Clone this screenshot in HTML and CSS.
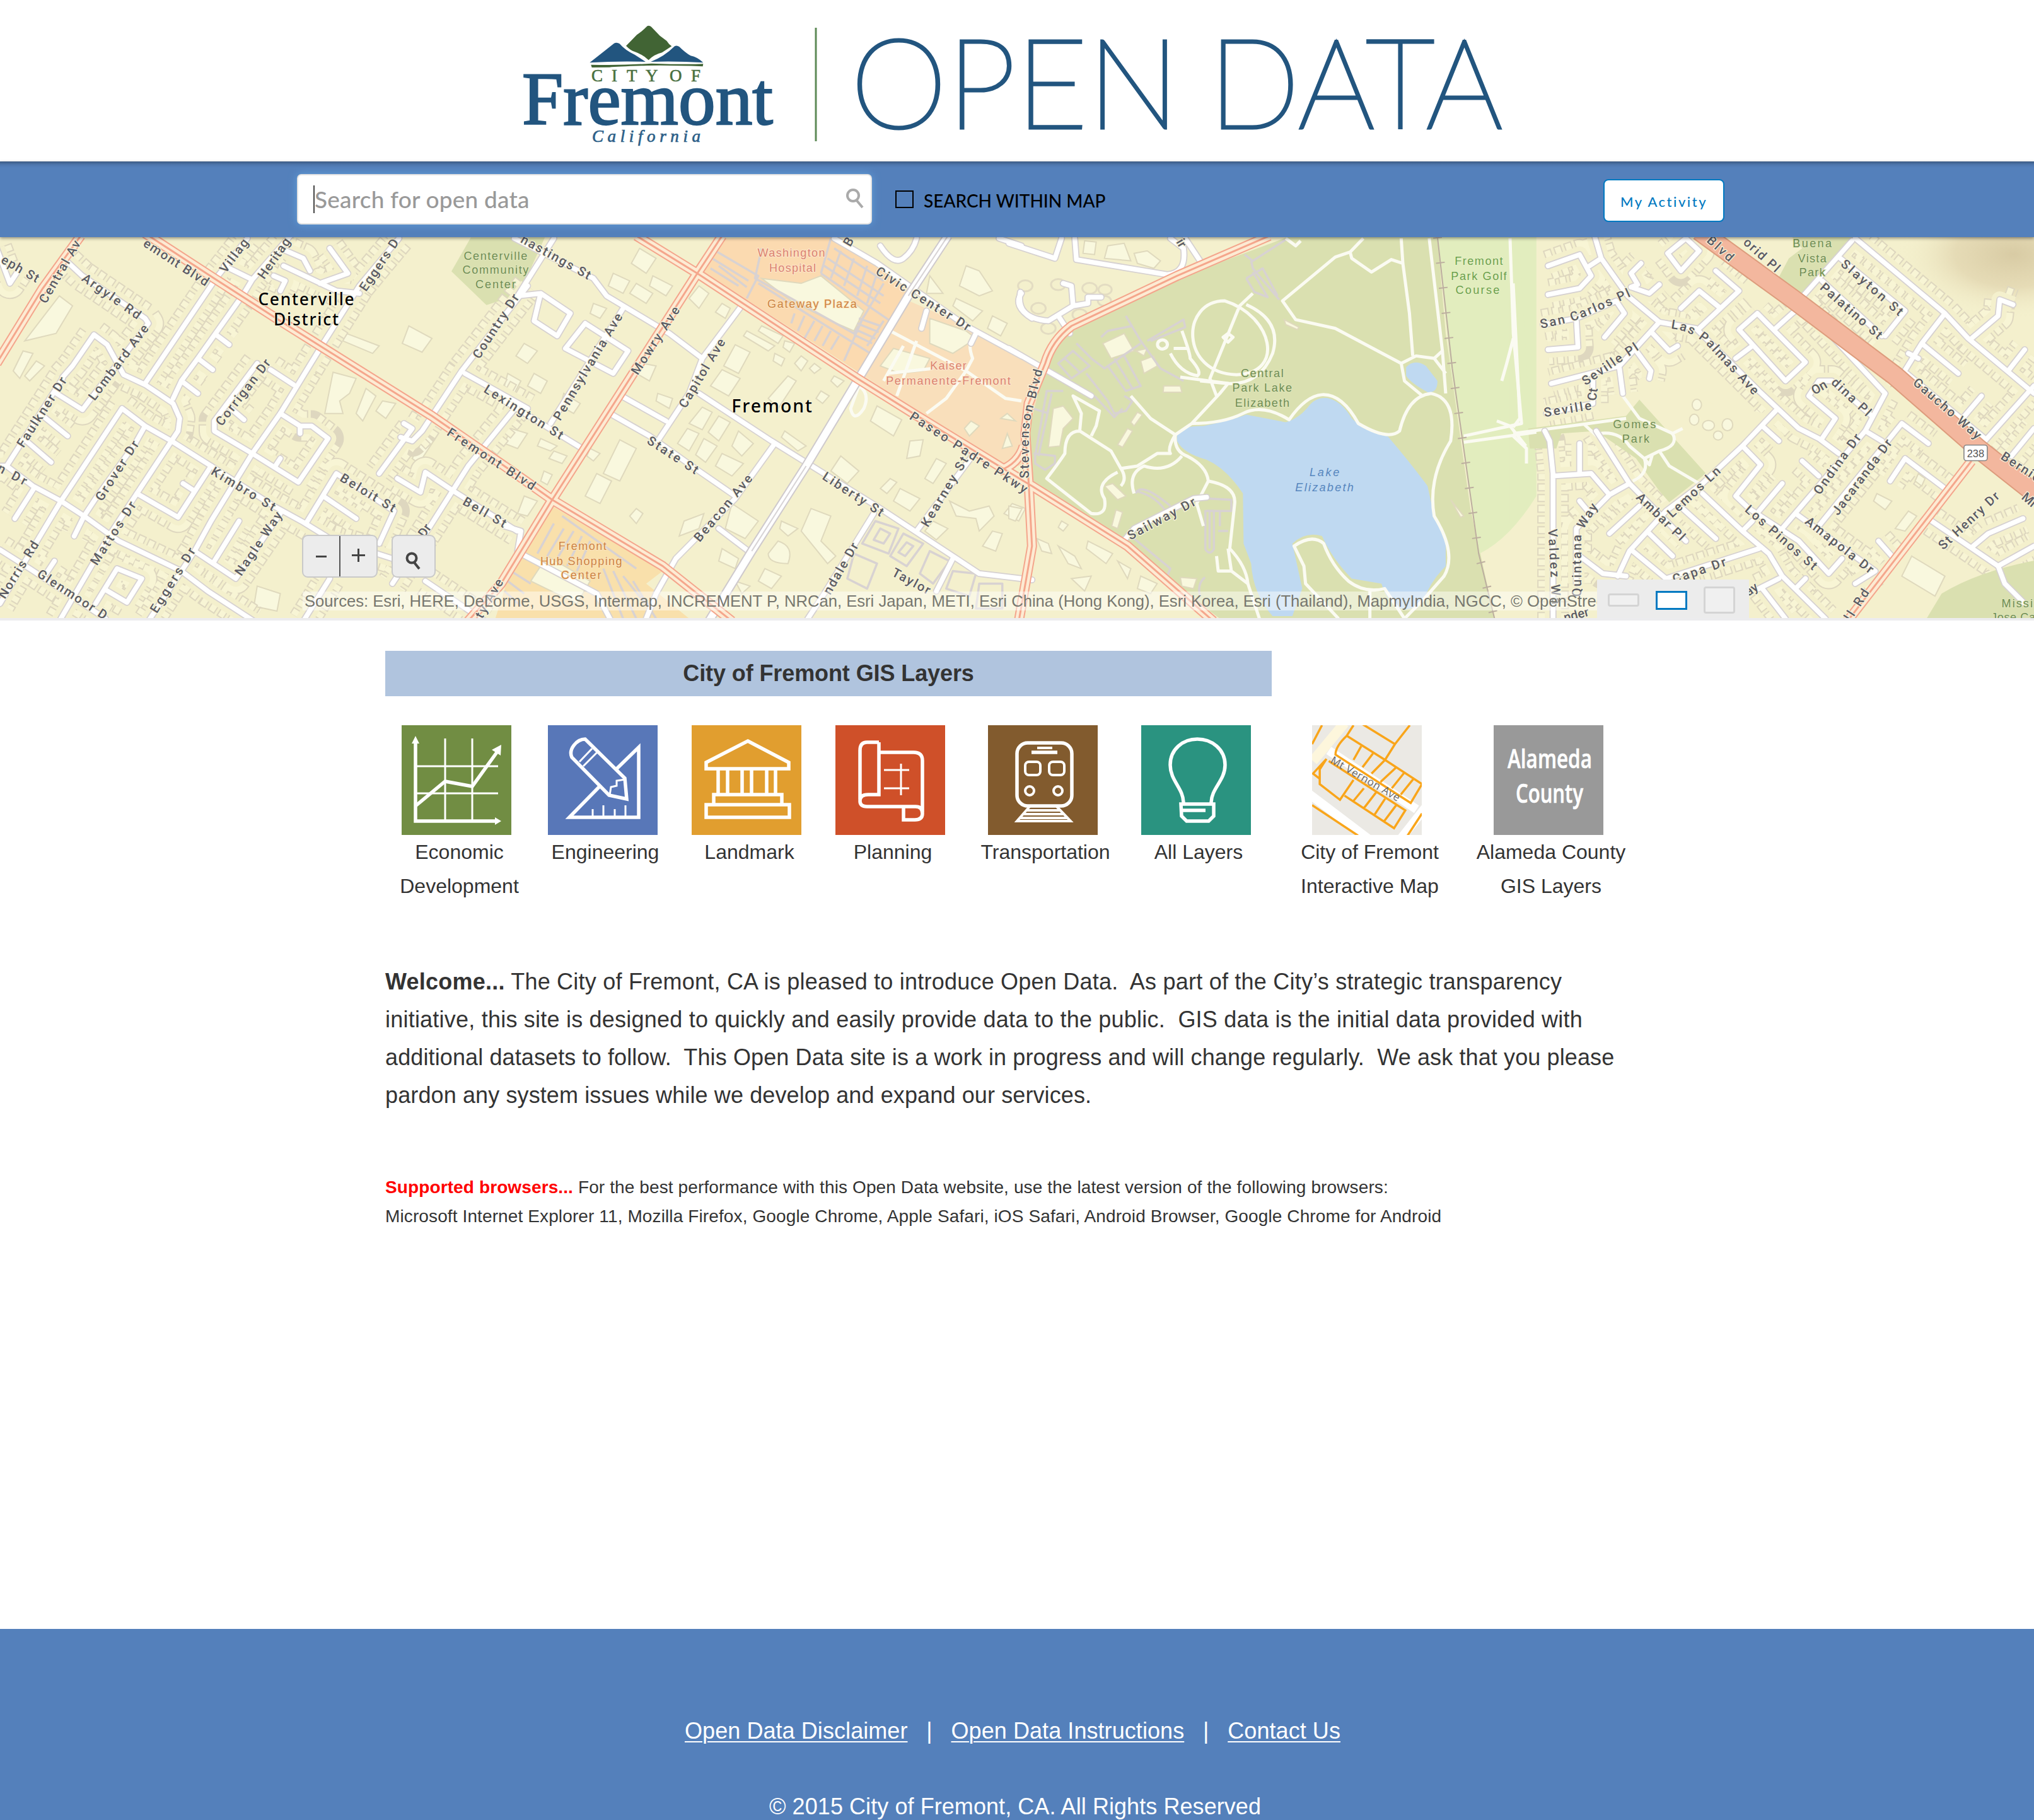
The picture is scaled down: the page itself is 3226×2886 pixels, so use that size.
FILE: index.html
```html
<!DOCTYPE html>
<html lang="en">
<head>
<meta charset="utf-8">
<title>City of Fremont Open Data</title>
<link rel="stylesheet" href="styles.css">
</head>
<body>
<header class="masthead">
  <svg class="logo" width="1586" height="256" viewBox="820 0 1586 256" role="img" aria-label="City of Fremont California Open Data">
    <g transform="translate(820 30) scale(.3333)">
      <path class="navy" d="M346 208Q400 165 462 116Q475 110 488 118Q515 150 560 170L612 204Q480 200 346 208Z"/>
      <path class="navy" d="M636 204Q700 180 750 130Q760 124 772 132Q800 160 826 175Q860 182 886 208Q760 200 636 204Z"/>
      <path class="green" d="M519 128L570 76Q600 55 620 34Q629 29 638 37L680 80L712 104Q722 120 736 130L690 160Q650 170 626 196Q600 170 560 156Q540 150 519 128Z"/>
      <path class="green" d="M352 218Q500 222 640 212Q800 218 886 214L884 226Q740 220 620 222Q480 226 440 230Q400 230 356 231Z"/>
    </g>
    <text class="city" y="129" x="938 970 994 1024 1062 1096">CITYOF</text>
    <text class="fremont" x="828" y="197" textLength="398" lengthAdjust="spacingAndGlyphs">Fremont</text>
    <text class="california" x="939" y="225" textLength="172">California</text>
    <path class="rule" d="M1294 44V224"/>
    <text class="open" x="1349" y="203" textLength="522" lengthAdjust="spacingAndGlyphs">OPEN</text>
    <text class="open" x="1917" y="203" textLength="466" lengthAdjust="spacingAndGlyphs">DATA</text>
  </svg>
</header>

<div class="searchbar">
  <div class="field">
    <span class="placeholder">Search for open data</span>
    <svg width="32" height="34" viewBox="0 0 32 34"><circle cx="12" cy="11" r="9"/><path d="M17 18L27 30"/></svg>
  </div>
  <label class="within"><span class="box"></span><span>SEARCH WITHIN MAP</span></label>
  <button class="activity">My Activity</button>
</div>

<section class="map">
<svg class="tiles" viewBox="0 182.76 1568 292.6" preserveAspectRatio="none">
  <defs>
    <radialGradient id="hill"><stop offset="0" stop-color="#d8cba4"/><stop offset=".5" stop-color="#e2d6b0" stop-opacity=".8"/><stop offset="1" stop-color="#f4f0cd" stop-opacity="0"/></radialGradient>
    <g id="west" transform="translate(0 179.84) scale(.2542 .1922)">
      <path d="M-10 60L30 200L60 140M205 115L250 170L440 340L450 360L270 670L250 705L165 635M190 575L220 530L285 405L325 445L375 565L440 605L525 680L545 740L540 790L520 830"/>
      <path d="M750 20L655 180L440 600M880 10L765 185L740 240L600 500L550 590L525 660M655 405L695 445M600 500L645 545M550 590L600 640M680 130L765 185"/>
      <path d="M1210 20L1090 210L980 440L850 720L765 880L640 1150L590 1270L450 1550M860 130L1020 230L1090 240M830 170L865 190L850 230M1000 60L1055 160L970 200M850 60L920 100L940 150"/>
      <path d="M820 545L890 605M780 520L650 750L650 790L765 880L905 995L995 820L945 770L910 770L850 720M910 770V800M700 700L740 745M850 900L835 930"/>
      <path d="M370 700L440 770L520 830L640 930L830 1090L920 1155L1000 1220L1190 1300M370 700L185 1070L110 1235L0 1480M440 770L410 840L290 1060L255 1130L225 1210M520 830L415 1040L330 1210L180 1550"/>
      <path d="M415 1040L540 1135L640 930M555 1000L590 1030M-10 930L20 930L100 1010L185 1070L255 1130L360 1230L550 1350L630 1430L770 1550M105 1015L45 1140M165 1310L140 1360M0 1265L90 1340L320 1540"/>
      <path d="M190 580L20 930M80 830L155 915M130 730L205 810M590 1270L715 1380L850 1120M650 1310L725 1150M290 1480L355 1340L430 1380L385 1475L320 1425"/>
      <path d="M930 1155L1020 960L1195 1110L1150 1240M980 1050L1080 1140M1225 760L1250 780L1150 960M1205 980L1275 1035L1290 955L1375 1030L1568 1190"/>
      <path d="M1600 210L1400 550L1280 790L1250 830L1215 815M1410 560L1600 700M1568 690L1420 930L1300 1180L1190 1400M1000 1380L920 1550M1290 1390L1470 1550"/>
    </g>
    <g id="east" transform="translate(1166.5 179.84) scale(.25605 .1922)">
      <path d="M245 10L265 100L345 250L440 355L550 380L740 630L860 780L920 820L980 880M265 100L230 130M105 130L200 85L235 170L200 220L105 245M355 215L410 240L440 205M355 215L375 205L355 160L385 120"/>
      <path d="M90 365L190 340L310 270L335 320L275 415M190 340L195 455L105 465M440 355L320 530L115 600M365 460L415 550L410 580M420 400L470 470L495 450M320 540L330 640M240 560L240 680L100 720"/>
      <path d="M465 80L505 150L560 70L520 20L465 80M610 150L680 230L560 380M505 300L560 230L620 295M735 320L680 385L820 590L880 515L735 320M790 380L840 320L870 290M670 500L715 455"/>
      <path d="M1030 20L1300 320L1370 420L1568 640M1020 30L920 180L860 270M985 100L1180 310L1120 410M930 190L1110 410M1300 320L1230 440L1160 590M1230 440L1340 560M1190 480L1220 500M1380 420L1460 330L1465 265L1505 285M1490 550L1540 465"/>
      <path d="M860 270L1120 640L1060 790L1110 830M1185 560L1420 820M1340 760L1410 650M1420 830L1568 610M1500 890L1568 780M930 820L970 740L890 650L920 590L960 590L1080 730"/>
      <path d="M790 710L690 850L570 1000L460 1110L350 1270L315 1370M750 770L800 830M690 850L745 925L670 1050L710 1100L860 1230L950 1360L990 1300M570 1040L690 1190L770 1280L810 1370L940 1540M690 1190L720 1150"/>
      <path d="M1060 790L900 1040L810 1180M870 910L920 970M740 1110L810 1000M1170 760L920 1170M1170 760L1250 840M1180 900L1300 1020M1180 900L1135 990M850 1120L1090 1350M1100 1230L1140 1290M1090 1350L1030 1400M850 1420L880 1380"/>
      <path d="M1260 1150L1460 1330L1568 1250M1385 1250L1430 1200L1535 1140M95 790L110 830L120 960L120 1540M120 970L235 960L290 1045M200 960V840M200 1070L225 1110M350 1000L290 1045L190 1180L190 1400M290 1200L380 1090M250 790L350 1000L520 1230"/>
      <path d="M410 1200L480 1290M510 1100L610 1220M360 1270L460 1380M740 1260L460 1380M190 1280L270 1360L340 1370M740 1420L800 1380M750 1420L820 1540M1460 1330L1480 1400L1540 1480"/>
    </g>
    <g id="central" transform="translate(388.84 179.84) scale(.2542 .1922)">
      <path d="M30 20L270 180L310 250L500 400L600 500M590 640L810 830L920 920L1140 1100L1360 1290L1440 1360L1600 1385M725 280L600 500L560 640L470 820M355 650L490 750M320 720L440 810L590 950L700 1050"/>
      <path d="M820 840L700 1060L580 1220L520 1300L460 1440L430 1540M650 1180L745 1275M1000 20L1130 120L1400 370L1568 490M360 300L140 760M150 20L40 250L110 240L200 320L160 410L90 350L110 240"/>
      <path d="M245 360L185 460L330 560L375 470L245 360M0 670L230 855M0 1170L50 1190L40 1270M1430 870L1250 1190M1120 1120L970 1440L920 1540M1360 1300L1310 1430M50 1280L280 1440L320 1540M1280 310L1265 380M1430 400L1415 440"/>
      <path d="M1140 50Q1180 130 1210 100T1250 20M1500 20L1568 50M1568 240Q1540 290 1600 340"/>
    </g>
    <g id="cityhall" transform="translate(777.68 179.84) scale(.2542 .1922)">
      <path d="M0 40L140 100L160 20M200 20L205 105L480 165Q540 160 530 60L490 20M535 20L585 120M0 460L250 650M35 235Q20 340 120 350L195 290L240 280V255H280M195 290L190 210L165 200M150 330L185 400M345 1235L380 1180L560 1060L600 1055"/>
    </g>
    <g id="trails" transform="translate(777.68 179.84) scale(.2542 .1922)">
      <path d="M1075 20L1035 75L990 95L830 270L870 345L990 380L1190 520L1235 490L1290 500L1315 470M1035 75L1040 100L1100 155L1160 105L1195 120L1190 20M1195 120L1215 320L1225 490M1275 20L1315 470L1325 640M1290 500L1325 560M1190 520L1200 590L1255 650"/>
      <path d="M555 760Q650 760 710 720T850 745Q900 650 950 645Q1010 640 1060 760Q1150 830 1185 790Q1210 650 1280 640Q1360 660 1340 830Q1270 980 1290 1130Q1360 1280 1320 1370L1260 1460L1200 1540M505 805L555 760L640 640L665 600L520 575"/>
      <path d="M655 270C520 270 520 560 690 565C840 560 800 330 655 270ZM720 285Q830 350 800 480Q760 610 660 600L580 590M740 240L700 290L610 580L630 650M665 400L650 415L665 435L680 415Z"/>
      <path d="M370 650L430 740L505 805Q480 860 490 880L450 880L390 930L340 940L310 870L215 790L220 720L195 650L275 710L265 770L250 810M215 790Q170 790 170 880Q150 920 115 980L250 1120Q300 1130 290 1060Q260 1000 330 955M340 940Q360 980 340 1010"/>
      <path d="M505 805Q500 870 540 890Q600 930 605 990Q690 1010 685 1080L670 1260Q720 1330 725 1400L760 1540M525 890Q480 960 410 930Q360 960 380 1040M605 990L570 1080L590 1170M665 1260L675 1350L725 1400M630 1290L635 1350L675 1350"/>
      <path d="M1000 1540L900 1400L895 1330L865 1250Q920 1200 955 1240Q980 1330 1030 1390Q1080 1440 1140 1420L1200 1540M1095 1430V1540M1520 20L1530 400L1555 760L1380 810M1600 795L1380 835M1530 420L1510 520L1495 590M1480 750L1520 770L1568 850M840 20L870 50L885 30"/>
      <path d="M525 390Q550 480 550 500Q590 560 570 570M500 460H540M490 480Q520 560 575 570M475 430A15 18 0 1 0 476 431Z"/>
    </g>
    <g id="eastTrails" transform="translate(1166.5 179.84) scale(.25605 .1922)">
      <path d="M0 800L200 765L340 740M215 765L260 820M330 650L380 740L480 800Q500 850 440 870L395 900L410 925L420 880M260 800Q320 790 350 850L395 900Q410 960 360 990M440 870L470 930L560 1000M0 810L40 860V920M0 200L20 740L0 775M480 800L510 780"/>
    </g>
    <g id="lots" transform="translate(777.68 179.84) scale(.2542 .1922)">
      <path d="M840 25L740 110L715 85M735 110L740 140L820 265M720 180L770 140L815 250M720 180L745 235L785 255L740 155M355 330L400 430L460 540L530 590M280 415L300 390L375 370M420 430L530 345L535 375L430 430M205 440L250 500L290 540L400 440M150 520L195 470L245 530L190 580ZM170 500L215 555M300 530L355 630L400 610L350 490M235 560L300 670L320 720L355 710L375 670L350 650M320 500L375 620M260 650L320 735L345 700"/>
      <path d="M165 630H115L80 890V920L110 945L140 920V890L75 880M130 640L90 890M50 690L120 720M385 1040Q400 990 490 1090M385 1030Q450 1050 480 1120M600 1060L675 1065V1110H600M380 1220L490 1340L480 1370M595 1375Q570 1400 580 1450"/>
      <path d="M596 1110V1262Q608 1290 622 1262V1110ZM609 1110V1260M640 1110V1170M635 1190H665"/>
    </g>
    <g id="centralLots" transform="translate(388.84 179.84) scale(.2542 .1922)">
      <path d="M640 70L770 170L735 260M630 100L740 190M650 130L735 215M625 140L710 210M780 60L760 180L1060 400L1150 200M960 160L1170 350M1000 60L1150 190M980 100L1150 250M970 130L1140 280M770 200L1110 480M1090 330L1030 510M1150 350L1100 450M880 320L870 360M910 330L890 390M940 350L910 420M965 370L940 430M990 390L965 450M1015 410L990 465M1075 340L1140 370M1070 360L1135 395M1065 385L1125 420M1060 405L1115 440M990 20L960 160M1020 70L990 180M1060 100L1030 210M1100 130L1070 250M1130 160L1100 280"/>
      <path d="M175 1130L400 1340M150 1160L100 1280M180 1180L130 1290M210 1190L160 1300M235 1210L190 1330M260 1230L220 1350M300 1340L360 1540M330 1350L400 1540M360 1370L440 1500M390 1390L460 1540M20 1350L80 1400M10 1390L60 1440M0 1430L50 1490"/>
      <path d="M1125 1150L1195 1180L1165 1280L1085 1240ZM1140 1180L1170 1200L1150 1240L1120 1225ZM1210 1200L1270 1240L1220 1330L1170 1290ZM1220 1235L1240 1250L1215 1290L1195 1275ZM1060 1280L1130 1320L1100 1420L1040 1380ZM1290 1270L1350 1310L1300 1400L1260 1360ZM1360 1350L1430 1360L1410 1450L1340 1420ZM1440 1400H1510V1500H1430Z"/>
    </g>
    <g id="kaiserPaths" transform="translate(388.84 179.84) scale(.2542 .1922)">
      <path d="M1170 390L1400 550L1520 660L1568 670M1400 550L1340 660L1280 720M1250 430L1190 650M1210 450L1150 590M1430 400Q1400 430 1420 500L1400 550M1160 560L1300 540M1075 610Q1110 640 1090 700Q1060 760 1050 700Z"/>
    </g>
    <g id="arterials" transform="translate(388.84 179.84) scale(.2542 .1922)">
      <path d="M400 10L585 160L1070 580L1240 720L1568 985L1600 1010L1890 1250L2150 1550M660 10L585 160L145 1065L-10 1400L-110 1550M2320 10L2040 170L1720 370Q1660 430 1640 520L1590 680L1580 800L1590 1000L1600 1250L1560 1550M1500 950Q1560 920 1575 850"/>
      <path d="M-1090 0L-880 180L-680 350L-220 730L0 930L145 1065L480 1330L690 1550"/>
      <path d="M-1285 10L-1400 220L-1540 520"/>
      <path d="M4449 910L4073 1550"/>
    </g>
  </defs>

  <rect class="ground" y="180" width="1568" height="300"/>
  <ellipse cx="1552" cy="196" rx="90" ry="50" fill="url(#hill)"/>
  <path class="park" d="M363 183H420L400 227L375 235L348 209Z"/>
  <g transform="translate(388.84 179.84) scale(.2542 .1922)">
    <path class="medical" d="M655 20L600 150L1080 560L1170 370L1230 240L1130 120L990 15Z"/>
    <path class="clinic" d="M1210 260L1400 370L1568 490L1640 540L1570 930L1500 920L1090 570Z"/>
    <path class="retail" d="M145 1090L480 1350L430 1400L570 1550H-30L30 1300Z"/>
    <g class="building">
      <path d="M410 60L460 100L430 160L385 120ZM590 210L620 240L590 300L560 260ZM660 280L685 300L670 340L640 315ZM700 445L745 475L710 560L665 530ZM660 545L715 580L680 650L625 610ZM860 570L885 590L830 700L800 660ZM600 695L630 715L600 785L560 760ZM650 730L685 755L650 830L618 795ZM555 780L590 800L560 870L525 840ZM605 820L645 850L610 915L580 885ZM710 790L755 840L720 890L690 850ZM660 880L725 920L690 970L640 930Z"/>
      <path d="M350 825L400 860L350 990L300 960ZM280 960L325 990L290 1080L245 1050ZM400 1100L420 1120L400 1160L380 1130ZM1130 690L1205 745L1180 810L1110 750ZM1020 890L1075 950L1040 1000L990 950ZM1230 830L1270 825L1260 890L1220 900ZM850 790L915 850L890 870L840 815ZM930 1100L990 1130L960 1230L1005 1290L980 1320L900 1190ZM690 1080L770 1150L730 1220L670 1180ZM830 1230Q880 1250 860 1320Q800 1320 800 1280Z"/>
      <path d="M1310 900L1340 920L1300 1000L1275 980ZM1200 1020L1260 1060L1230 1110L1180 1070ZM1170 980L1190 995L1160 1040L1140 1020ZM1300 1150L1345 1180L1310 1225L1275 1190ZM1350 1070L1410 1110L1470 1090L1485 1130L1440 1190L1430 1140L1370 1130ZM1480 1190L1510 1200L1490 1270L1450 1250ZM1400 130L1440 150L1480 230L1440 250L1380 210ZM1370 260L1450 310L1420 350L1360 290ZM1480 330L1525 360L1505 410L1465 380ZM1540 1080L1580 1100L1560 1150L1515 1120Z"/>
      <path d="M780 180L900 200L960 170L1090 310L1060 390L990 350L870 270ZM1290 340L1400 390L1430 420L1360 480L1290 440ZM1180 460L1290 500L1270 550L1200 560L1140 530ZM1415 750L1440 770L1410 810L1395 780ZM1525 800L1540 850L1510 860ZM1525 720L1550 750L1505 740ZM130 1290L260 1390L220 1480L80 1390ZM780 370L845 410L830 440L770 390ZM735 390L820 450L800 470L725 410ZM1000 570L1030 590L1010 615L990 590ZM960 630L985 650L965 680L945 660ZM465 640L510 660L500 700L460 670ZM790 1340L840 1370L810 1420L770 1390ZM545 1150L605 1120L590 1180L530 1210ZM420 520L460 530L440 590L400 560Z"/>
      <path d="M260 860L290 880L270 910L250 890ZM120 950L145 965L130 1005L110 990ZM840 1150L890 1180L860 1210L835 1180ZM900 490L920 510L900 550L880 520ZM940 520L960 540L940 560L925 540ZM820 480L850 500L840 530L815 510ZM850 430L880 440L865 475L845 455ZM700 1390L745 1410L720 1440ZM660 1260L710 1300L700 1340L650 1310ZM1290 170L1330 240L1280 240Z"/>
      <path d="M330 160L380 190L360 240L315 210ZM400 200L450 240L430 280L380 240ZM450 170L510 210L490 250L440 210ZM270 280L310 300L290 340L260 320ZM60 440L100 470L70 520L35 490ZM90 560L130 590L110 640L70 610ZM10 560L50 590L30 640L0 610ZM180 640L230 680L210 720L170 690ZM20 780L70 800L40 860L0 840ZM110 820L160 850L140 870L100 850ZM150 870L190 890L175 920L135 900ZM60 1050L100 1070L70 1130L40 1120Z"/>
    </g>
  </g>
  <g transform="translate(0 179.84) scale(.2542 .1922)" class="building">
    <path d="M1010 555L1080 580L1060 640L1030 670L1040 720L985 720ZM1110 620L1140 650L1100 750L1080 720ZM1160 670L1200 680L1170 740L1140 710ZM1240 370L1310 420L1280 475L1220 440ZM1050 400L1150 450L1130 480L1040 430ZM70 470L100 480L60 580L40 550ZM110 510L135 530L90 590L75 570ZM180 250L220 290L170 400L75 430ZM1290 810L1320 820L1270 920L1250 900ZM780 1410L850 1440L840 1510L770 1490ZM940 540L960 560L940 580Z"/>
  </g>
  <g transform="translate(777.68 179.84) scale(.2542 .1922)">
    <path class="park" d="M845 15H1300L1325 400L1400 1100L1475 1550H650L350 1250L60 1000V800L110 520Q130 440 180 400L510 180Z"/>
    <path class="golf" d="M1300 15H1600V1050Q1520 1220 1428 1280L1340 540Z"/>
    <path class="water" d="M510 800Q520 770 590 770Q670 750 720 725Q780 740 840 755Q880 740 910 690Q930 655 965 658Q1010 670 1040 740Q1080 790 1150 812Q1220 920 1270 1010L1285 1100L1325 1240V1330Q1280 1390 1260 1460Q1230 1510 1190 1500Q1150 1480 1130 1400L1040 1380Q980 1300 950 1210Q900 1190 860 1240L890 1420L860 1530H800Q740 1440 735 1320L712 1240L710 1040Q660 940 600 905Q530 880 510 830Z"/>
    <path class="water" d="M1205 535Q1230 500 1265 530L1300 590Q1300 640 1270 635Q1220 600 1205 570Z"/>
    <g class="building"><path d="M285 440L350 400L380 470L310 500ZM135 700L165 690L195 740L165 780L155 850L120 855ZM470 610L520 610L525 635L468 635ZM400 510L440 490L450 530L410 560ZM385 470L420 460L410 490ZM290 1010L315 1000L355 1050L330 1065ZM325 1105L345 1115L330 1180L312 1170ZM390 715L405 725L380 770L370 755ZM360 780L375 790L345 855L330 845ZM520 1375L570 1380L560 1420L525 1410ZM835 345L880 375L875 385L840 365ZM1340 1065L1380 1130L1370 1135ZM0 1090L40 1100L20 1150L0 1140ZM160 1150L180 1165L165 1190L150 1175ZM240 1230L315 1280L295 1320L235 1260ZM85 1220L120 1240L130 1280L100 1270ZM150 1250L200 1290L220 1340L180 1320ZM380 80L420 70L460 110L440 140L390 120ZM230 30L265 35L260 85L225 80ZM300 50L350 40L370 110L290 100ZM330 1310L370 1340L360 1380ZM400 1370L450 1400L430 1440L390 1420ZM190 1380L250 1370L230 1430Z"/></g>
    <g class="court"><circle cx="50" cy="210" r="22"/><circle cx="90" cy="300" r="22"/><circle cx="150" cy="205" r="22"/><circle cx="245" cy="220" r="22"/><circle cx="292" cy="225" r="20"/><circle cx="215" cy="325" r="22"/><circle cx="120" cy="380" r="22"/><circle cx="290" cy="270" r="20"/></g>
  </g>
  <g transform="translate(1166.5 179.84) scale(.25605 .1922)">
    <path class="golf" d="M-10 15H18L62 1040L-10 1160Z"/>
  </g>

  <g class="line houses"><use href="#west"/><use href="#east"/></g>
  <g class="line roofs"><use href="#west"/><use href="#east"/></g>
  <g class="line yards"><use href="#west"/><use href="#east"/></g>
  <g transform="translate(1166.5 179.84) scale(.25605 .1922)">
    <path class="park" d="M830 100L870 60L840 15H1025L860 270L790 200Z"/>
    <path class="ground" d="M395 580L600 680L760 720L700 800L570 960L400 670L370 620Z"/>
    <path class="park" d="M45 780L340 730L380 665L580 960L470 1075L440 1030L370 900L250 790L145 800L130 860H50Z"/>
    <path class="park" d="M1580 1305Q1400 1350 1290 1440L1240 1550H1580Z"/>
  </g>
  <g transform="translate(1166.5 179.84) scale(.25605 .1922)" class="building">
    <ellipse cx="553" cy="685" rx="14" ry="22"/><ellipse cx="545" cy="745" rx="14" ry="22"/><ellipse cx="588" cy="768" rx="18" ry="20"/><ellipse cx="617" cy="808" rx="14" ry="18"/><ellipse cx="645" cy="765" rx="16" ry="24"/><path d="M1200 1290L1300 1370L1270 1450L1170 1370ZM1095 1040L1140 1070L1120 1105L1085 1070ZM1190 1110L1215 1130L1180 1190L1150 1180ZM1220 960L1240 980L1230 1010L1210 990Z"/>
  </g>
  <g class="line lot"><use href="#lots"/><use href="#centralLots"/></g>
  <g class="line trail"><use href="#trails"/><use href="#eastTrails"/><use href="#kaiserPaths"/></g>
  <g class="line rail" transform="translate(777.68 179.84) scale(.2542 .1922)"><path d="M1300 15L1345 540L1425 1280L1475 1550"/><path class="ties" d="M1300 15L1345 540L1425 1280L1475 1550"/></g>
  <g class="line casing"><use href="#west"/><use href="#east"/><use href="#central"/><use href="#cityhall"/></g>
  <g class="line paving"><use href="#west"/><use href="#east"/><use href="#central"/><use href="#cityhall"/></g>
  <g transform="translate(388.84 179.84) scale(.2542 .1922)" class="line">
    <path class="avenue-case" d="M1345 10L1225 250L1070 590L915 930L750 1270L620 1550"/>
    <path class="avenue" d="M1345 10L1225 250L1070 590L915 930L750 1270L620 1550"/>
    <path class="median" d="M1345 10L1225 250M915 930L750 1270"/>
  </g>
  <g class="line artery-case"><use href="#arterials"/></g>
  <g class="line artery"><use href="#arterials"/></g>
  <g class="line artery-mid"><use href="#arterials"/></g>
  <g class="line" transform="translate(1166.5 179.84) scale(.25605 .1922)">
    <path class="highway-case" d="M560 -10L840 260L1150 570L1400 860L1600 1070"/>
    <path class="highway" d="M560 -10L840 260L1150 570L1400 860L1600 1070"/>
  </g>
  <rect class="shield" x="1514" y="342.5" width="18" height="12" rx="2"/>
  <text class="shield-no" x="1523" y="352" text-anchor="middle">238</text>

  <defs>
    <path id="lasPalmas" d="M1288 253Q1305 255 1316 266L1356 309"/>
    <path id="quintana" d="M1219 459V410L1233 388"/>
    <path id="sanCarlos" d="M1188 253L1211 248Q1232 240 1240 236L1262 226"/>
    <path id="stevenson" d="M793 368V338Q793 325 797 312L804 284"/>
  </defs>
  <g class="street">
    <text transform="translate(14 210) rotate(30)" textLength="32">eph St</text>
    <text transform="translate(49 211) rotate(-60)" textLength="54">Central Av</text>
    <text transform="translate(84 231) rotate(35)" textLength="53">Argyle Rd</text>
    <text transform="translate(94 281) rotate(-53)" textLength="70">Lombard Ave</text>
    <text transform="translate(134 205) rotate(33)" textLength="58">emont Blvd</text>
    <text transform="translate(183 199) rotate(-53)" textLength="30">Villag</text>
    <text transform="translate(214 201) rotate(-55)" textLength="36">Heritag</text>
    <text transform="translate(295 206) rotate(-56)" textLength="46">Eggers D</text>
    <text transform="translate(190 304) rotate(-52)" textLength="62">Corrigan Dr</text>
    <text transform="translate(385 253) rotate(-57)" textLength="57">Country Dr</text>
    <text transform="translate(402 320) rotate(32)" textLength="70">Lexington St</text>
    <text transform="translate(456 284) rotate(-59)" textLength="94">Pennsylvania Ave</text>
    <text transform="translate(508 264) rotate(-57)" textLength="60">Mowry Ave</text>
    <text transform="translate(544 289) rotate(-59)" textLength="60">Capitol Ave</text>
    <text transform="translate(427 201) rotate(29)" textLength="60">hastings St</text>
    <text transform="translate(377 356) rotate(33)" textLength="79">Fremont Blvd</text>
    <text transform="translate(186 379) rotate(31)" textLength="56">Kimbro St</text>
    <text transform="translate(282 382) rotate(31)" textLength="48">Beloit St</text>
    <text transform="translate(372 397) rotate(30)" textLength="37">Bell St</text>
    <text transform="translate(517 353) rotate(33)" textLength="45">State St</text>
    <text transform="translate(560 393) rotate(-50)" textLength="64">Beacon Ave</text>
    <text transform="translate(656 383) rotate(33)" textLength="54">Liberty St</text>
    <text transform="translate(731 380) rotate(-59)" textLength="61">Kearney St</text>
    <text transform="translate(745 351) rotate(33)" textLength="106">Paseo Padre Pkwy</text>
    <text transform="translate(710 233) rotate(32)" textLength="84">Civic Center Dr</text>
    <text transform="translate(897 402) rotate(-28)" textLength="58">Sailway Dr</text>
    <text transform="translate(651 439) rotate(-60)" textLength="44">ndale Dr</text>
    <text transform="translate(701 450) rotate(28)" textLength="32">Taylor</text>
    <text transform="translate(35 319) rotate(-57)" textLength="62">Faulkner Dr</text>
    <text transform="translate(8 368) rotate(28)" textLength="24">n Dr</text>
    <text transform="translate(93 364) rotate(-57)" textLength="53">Grover Dr</text>
    <text transform="translate(90 412) rotate(-57)" textLength="56">Mattos Dr</text>
    <text transform="translate(17 440) rotate(-58)" textLength="50">Norris Rd</text>
    <text transform="translate(54 460) rotate(33)" textLength="62">Glenmoor D</text>
    <text transform="translate(136 448) rotate(-58)" textLength="57">Eggers Dr</text>
    <text transform="translate(202 420) rotate(-56)" textLength="57">Nagle Way</text>
    <text transform="translate(330 410) rotate(-55)">Dr</text>
    <text transform="translate(380 462) rotate(-60)" textLength="33">ty Ave</text>
    <text transform="translate(1243 283) rotate(-34)" textLength="50">Seville Pl</text>
    <text transform="translate(1231 304) rotate(-82)">Ct</text>
    <text transform="translate(1209 318) rotate(-9)" textLength="37">Seville</text>
    <text transform="translate(1195 436) rotate(87)" textLength="58">Valdez Wa</text>
    <text transform="translate(1278 400) rotate(44)" textLength="48">Ambar Pl</text>
    <text transform="translate(1308 381) rotate(-43)" textLength="52">Lemos Ln</text>
    <text transform="translate(1371 416) rotate(41)" textLength="70">Los Pinos St</text>
    <text transform="translate(1311 442) rotate(-19)" textLength="43">Capa Dr</text>
    <text transform="translate(1416 422) rotate(38)" textLength="64">Amapola Dr</text>
    <text transform="translate(1438 369) rotate(-53)" textLength="70">Jacaranda Dr</text>
    <text transform="translate(1419 359) rotate(-54)" textLength="55">Ondina Dr</text>
    <text transform="translate(1404 301) rotate(-30)">On</text>
    <text transform="translate(1425 308) rotate(43)" textLength="38">dina Pl</text>
    <text transform="translate(1499 317) rotate(41)" textLength="66">Gaucho Way</text>
    <text transform="translate(1556 362) rotate(33)" textLength="34">Bernie</text>
    <text transform="translate(1520 403) rotate(-43)" textLength="60">St Henry Dr</text>
    <text transform="translate(1441 224) rotate(41)" textLength="60">Slayton St</text>
    <text transform="translate(1425 242) rotate(41)" textLength="60">Palatino St</text>
    <text transform="translate(1356 199) rotate(42)" textLength="34">orid Pl</text>
    <text transform="translate(1324 194) rotate(42)" textLength="24">Blvd</text>
    <text transform="translate(1562 387) rotate(40)">Mi</text>
    <text transform="translate(1434 467) rotate(-57)" textLength="27">ll Rd</text>
    <text transform="translate(1352 456) rotate(-35)">ay</text>
    <text transform="translate(908 189) rotate(60)">ir</text>
    <text transform="translate(657 188) rotate(-60)">B</text>
    <text transform="translate(1216 476) rotate(-15)">nder</text>
    <text class="start"><textPath href="#lasPalmas" textLength="84">Las Palmas Ave</textPath></text>
    <text class="start"><textPath href="#quintana" textLength="73">Quintana Way</textPath></text>
    <text class="start"><textPath href="#sanCarlos" textLength="74">San Carlos Pl</textPath></text>
    <text class="start"><textPath href="#stevenson" textLength="84">Stevenson Blvd</textPath></text>
  </g>
  <g class="place">
    <g class="p-park"><text x="382" y="200" textLength="49">Centerville</text><text x="382" y="211" textLength="51">Community</text><text x="382" y="222" textLength="31">Center</text>
    <text x="973" y="290.5" textLength="33">Central</text><text x="973" y="301.5" textLength="46">Park Lake</text><text x="973" y="313" textLength="42">Elizabeth</text>
    <text x="1260" y="329.5" textLength="33">Gomes</text><text x="1261" y="340.5" textLength="21">Park</text>
    <text x="1397" y="190.5" textLength="30">Buena</text><text x="1397" y="202" textLength="22">Vista</text><text x="1397" y="213" textLength="20">Park</text>
    <text x="1555" y="467" textLength="24">Missi</text><text x="1552" y="478" textLength="34">Jose Ca</text></g>
    <g class="p-golf"><text x="1140" y="204" textLength="37">Fremont</text><text x="1140" y="215.5" textLength="43">Park Golf</text><text x="1139" y="226.5" textLength="34">Course</text></g>
    <g class="p-water"><text x="1021" y="366.5" textLength="23">Lake</text><text x="1021" y="378" textLength="45">Elizabeth</text></g>
    <g class="p-med"><text x="610" y="198" textLength="52">Washington</text><text x="611" y="209.5" textLength="36">Hospital</text><text x="731" y="284.5" textLength="28">Kaiser</text><text x="731" y="296" textLength="96">Permanente-Fremont</text></g>
    <g class="p-shop"><text x="626" y="237" textLength="69">Gateway Plaza</text><text x="449" y="423" textLength="37">Fremont</text><text x="448" y="434.5" textLength="63">Hub Shopping</text><text x="448" y="445.5" textLength="31">Center</text></g>
    <g class="p-town"><text x="236" y="235" textLength="74">Centerville</text><text x="236" y="250.5" textLength="50">District</text><text class="big" x="595" y="317.5" textLength="62">Fremont</text></g>
  </g>
</svg>
  <div class="attribution"><span>Sources: Esri, HERE, DeLorme, USGS, Intermap, INCREMENT P, NRCan, Esri Japan, METI, Esri China (Hong Kong), Esri Korea, Esri (Thailand), MapmyIndia, NGCC, © OpenStreetMap</span></div>
  <div class="zoomer"><span class="minus"></span><span class="plus"></span></div>
  <div class="find"><svg width="28" height="32" viewBox="0 0 28 32"><circle cx="11" cy="11" r="7.5"/><path d="M15 18L23 28"/></svg></div>
  <div class="sizes"><i class="small"></i><i class="medium"></i><i class="large"></i></div>
</section>

<main class="content">
  <h2 class="banner">City of Fremont GIS Layers</h2>
  <div class="layers">
    <a class="layer economic"><svg class="icon" viewBox="0 0 174 174"><path class="thin" d="M69 21V152M112 21V152M22 65H153M22 108H153"/><path d="M22 24V152H152"/><path d="M22 128L69 89L112 97L151 43"/><path class="solid" d="M22 17L28 29H16ZM158 152L148 158V146ZM158 31L157 48L143 39Z"/></svg><span>Economic<br>Development</span></a>
    <a class="layer engineering"><svg class="icon" viewBox="0 0 174 174"><path d="M59 22L122 84L125 117L97 111L38 51C32 38 46 22 59 22ZM108 70L144 35V146H34L82 97"/><path class="thin" d="M50 58L70 37M56 65L78 43M122 86L109 88V96L100 98L98 111M71 146V133M88 146V127M106 146V133M123 146V127"/></svg><span>Engineering</span></a>
    <a class="layer landmark"><svg class="icon" viewBox="0 0 174 174"><path d="M89 25L154 59V69H23V59ZM42 70V109M57 70V109M80 70V109M95 70V109M119 70V109M133 70V109M35 110H143V126H35ZM23 126H155V146H23Z"/></svg><span>Landmark</span></a>
    <a class="layer planning"><svg class="icon" viewBox="0 0 174 174"><path d="M69 27H50Q39 27 39 40V118M69 27V110H52Q39 110 39 120Q39 129 50 129H127Q138 129 138 140Q138 150 126 150H108V130M69 43H124Q138 43 138 56V138"/><path class="thin" d="M104 61V111M77 71H117M77 100H117"/></svg><span>Planning</span></a>
    <a class="layer transport"><svg class="icon" viewBox="0 0 174 174"><rect x="46" y="28" width="87" height="100" rx="17"/><path d="M69 43H110"/><path class="mid" d="M78 36H102"/><rect class="mid" x="59" y="58" width="24" height="21" rx="6"/><rect class="mid" x="97" y="58" width="24" height="21" rx="6"/><circle class="mid" cx="66" cy="104" r="7"/><circle class="mid" cx="111" cy="104" r="7"/><path class="mid" d="M66 129L46 152H131L109 129M61 135H114M56 141H120M50 147H126"/></svg><span>Transportation</span></a>
    <a class="layer bulb"><svg class="icon" viewBox="0 0 174 174"><path d="M67 123C67 100 46 88 46 63C46 38 66 22 89 22C112 22 133 38 133 63C133 88 111 100 111 123M63 125H115V144L107 152H72L64 144ZM64 135H102"/></svg><span>All Layers</span></a>
    <a class="layer citymap"><svg class="icon" viewBox="0 0 174 174"><g transform="scale(.7143 .3333) translate(-813 -390)"><path class="wht" d="M790 690L950 950M1080 740L1010 930M850 510L1045 790"/><path class="crm" d="M885 380L815 560"/><path class="org" d="M925 385L997 480L1030 390M905 390L890 440L975 555L1057 670L1032 760L865 530Q865 490 890 440M975 555L997 480M922 490L905 555M948 525L925 590M975 555L945 620M1000 590L965 660M1018 615L990 690M1040 640L1010 720M845 550L830 600V670L875 745L905 650M845 550L815 620L830 645M885 725L995 880L1020 795L850 560M928 690L905 750M955 710L928 785M975 740L952 815M1000 770L972 850M1057 810L1025 915M813 770L915 915M813 480L835 390"/></g><text class="vernon" transform="translate(28 59) rotate(30)" textLength="124">Mt Vernon Ave</text></svg><span>City of Fremont<br>Interactive Map</span></a>
    <a class="layer alameda"><svg class="icon" viewBox="0 0 174 174"><text x="22" y="68" textLength="134" lengthAdjust="spacingAndGlyphs">Alameda</text><text x="35" y="123" textLength="107" lengthAdjust="spacingAndGlyphs">County</text></svg><span>Alameda County<br>GIS Layers</span></a>
  </div>
  <p class="welcome"><span class="roomy"><b>Welcome...</b> The City of Fremont, CA is pleased to introduce Open Data.&nbsp; As part of the City’s strategic transparency</span><br><span class="roomy">initiative, this site is designed to quickly and easily provide data to the public.&nbsp; GIS data is the initial data provided with</span><br>additional datasets to follow.&nbsp; This Open Data site is a work in progress and will change regularly.&nbsp; We ask that you please<br>pardon any system issues while we develop and expand our services.</p>
  <p class="support"><b>Supported browsers...</b> For the best performance with this Open Data website, use the latest version of the following browsers:<br>Microsoft Internet Explorer 11, Mozilla Firefox, Google Chrome, Apple Safari, iOS Safari, Android Browser, Google Chrome for Android</p>
</main>

<footer class="footer">
  <nav><a>Open Data Disclaimer</a><span>|</span><a>Open Data Instructions</a><span>|</span><a>Contact Us</a></nav>
  <p>© 2015 City of Fremont, CA. All Rights Reserved</p>
</footer>
</body>
</html>
```
FILE: styles.css
```css
* { box-sizing: border-box; }
body { margin: 0; width: 3226px; height: 2886px; overflow: hidden; background: #fff; color: #333; font-family: "Liberation Sans", Arial, sans-serif; display: flex; flex-direction: column; }

.masthead { height: 256px; display: flex; justify-content: center; flex: none; }
.logo { display: block; }
.navy { fill: #22557f; }
.green { fill: #416434; }
.rule { stroke: #5d8a56; stroke-width: 3; }
.city { font: 27px "Liberation Serif", serif; fill: #4a7040; stroke: #4a7040; stroke-width: .6; }
.fremont { font: 118px "Liberation Serif", serif; fill: #22557f; stroke: #22557f; stroke-width: 2.4; }
.california { font: italic 27px "Liberation Serif", serif; fill: #2d5f88; stroke: #2d5f88; stroke-width: .7; }
.open { font: 100 196px Lato, sans-serif; fill: #22557f; stroke: #22557f; stroke-width: 5; }

.searchbar { height: 120px; flex: none; background: linear-gradient(rgba(0,0,0,.3), rgba(0,0,0,.08) 5px, transparent 10px) #5480bb; padding: 0 491px 0 471px; display: flex; align-items: center; position: relative; z-index: 2; box-shadow: 0 2px 5px rgba(0,0,0,.4); font-family: Lato, sans-serif; }
.field { width: 912px; height: 80px; background: #fff; border: 2px solid #e2e2e2; border-radius: 7px; box-shadow: 0 0 14px rgba(100,165,225,.8); display: flex; align-items: center; justify-content: space-between; padding: 0 8px 0 24px; }
.placeholder { border-left: 2px solid #444; color: #999; font-size: 37px; line-height: 44px; font-weight: 500; letter-spacing: .2px; white-space: nowrap; }
.field svg { fill: none; stroke: #aaa; stroke-width: 4; }
.within { display: flex; align-items: center; gap: 16px; margin-left: 37px; color: #000; font-size: 28px; font-weight: 500; white-space: nowrap; }
.box { width: 29px; height: 28px; border: 2px solid #000; }
.within span:last-child { padding-top: 3px; }
.activity { margin-left: auto; width: 192px; height: 68px; margin-top: 4px; border: 2px solid #0079c1; border-radius: 8px; background: #fff; color: #0079c1; font: 500 22px Lato, sans-serif; letter-spacing: 2.5px; padding: 2px 0 0; white-space: nowrap; }

.map { height: 608px; flex: none; position: relative; border-bottom: 4px solid #ececee; overflow: hidden; }
.tiles { display: block; width: 3226px; height: 604px; }
.ground { fill: #f4f0cd; }
.park { fill: #dae0b0; }
.golf { fill: #e2edbe; }
.water { fill: #bfd9f1; }
.medical { fill: #fbdab0; }
.clinic { fill: #f9dfbb; }
.retail { fill: #f9e0ab; }
.building path, .building ellipse { fill: #f9f8de; stroke: #dfd9bd; stroke-width: 2; vector-effect: non-scaling-stroke; }
.court circle { fill: none; stroke: #e3dcc2; stroke-width: 3; vector-effect: non-scaling-stroke; }
.tiles path { vector-effect: non-scaling-stroke; }
.line { fill: none; stroke-linejoin: round; }
.houses { stroke: #ded7bf; stroke-width: 50; stroke-dasharray: 13 4; }
.roofs { stroke: #f8f5d5; stroke-width: 46; stroke-dasharray: 9 8; stroke-dashoffset: -2; }
.yards { stroke: #f4f0cd; stroke-width: 26; }
.lot { stroke: #d8d2d2; stroke-width: 3.5; }
.trail { stroke: #fbfbf2; stroke-width: 5; }
.rail { stroke: #bcae9f; stroke-width: 2; }
.rail .ties { stroke-width: 14; stroke-dasharray: 2 38; }
.casing { stroke: #d6d1d1; stroke-width: 11; stroke-linecap: round; }
.paving { stroke: #fff; stroke-width: 7.5; stroke-linecap: round; }
.avenue-case { stroke: #cfcacd; stroke-width: 15; }
.avenue { stroke: #fff; stroke-width: 11; }
.median { stroke: #d8d4d6; stroke-width: 2; }
.artery-case { stroke: #f4a58c; stroke-width: 16; }
.artery { stroke: #fdebd3; stroke-width: 12; }
.artery-mid { stroke: #f5a68c; stroke-width: 3; }
.highway-case { stroke: #dd9c7d; stroke-width: 32; }
.highway { stroke: #f3b79e; stroke-width: 28; }
.shield { fill: #fff; stroke: #888; stroke-width: .8; }
.shield-no { font: 8px "Liberation Sans", sans-serif; fill: #555; }
.street { font: 500 9.8px Roboto, "Liberation Sans", sans-serif; fill: #5b5b64; stroke: #f8f5dc; stroke-width: 1.2; paint-order: stroke; text-anchor: middle; }
.street .start { text-anchor: start; }
.place { text-anchor: middle; font: 8.8px "Liberation Sans", sans-serif; stroke-width: 1; paint-order: stroke; }
.p-park { fill: #6f8d54; stroke: #dfe5ba; }
.p-golf { fill: #6ca04c; stroke: #e6f0c6; }
.p-water { fill: #5686be; font-style: italic; }
.p-med { fill: #db8270; stroke: #fbe6cc; }
.p-shop { fill: #cd8343; stroke: #fbe6c0; }
.p-town { fill: #000; stroke: #f8f5dc; font: 500 12.8px "Noto Sans", sans-serif; }
.p-town .big { font-size: 13.8px; }

.attribution { position: absolute; left: 480px; top: 562px; width: 2053px; height: 30px; overflow: hidden; white-space: nowrap; background: rgba(255,255,255,.45); color: #77776f; font-size: 25.64px; line-height: 30px; padding-left: 3px; }
.zoomer, .find { position: absolute; top: 472px; height: 68px; background: #ececec; border: 2px solid #c9c9c9; border-radius: 9px; }
.zoomer { left: 479px; width: 120px; display: flex; }
.zoomer span { flex: 1; position: relative; }
.minus { border-right: 2px solid #555; }
.minus::before, .plus::before, .plus::after { content: ""; position: absolute; background: #444; }
.minus::before { left: 20px; top: 31px; width: 17px; height: 3px; }
.plus::before { left: 18px; top: 29px; width: 21px; height: 3px; }
.plus::after { left: 27px; top: 20px; width: 3px; height: 21px; }
.find { left: 621px; width: 70px; }
.find svg { position: absolute; left: 19px; top: 24px; fill: none; stroke: #444; stroke-width: 4; }
.sizes { position: absolute; left: 2533px; top: 543px; width: 241px; height: 61px; background: #ececec; display: flex; align-items: center; justify-content: space-between; padding: 4px 22px 0 17px; }
.sizes i { width: 50px; border: 3px solid #d4d4d4; border-radius: 4px; background: #f0f0f0; }
.small { height: 21px; }
.sizes .medium { height: 30px; border-color: #0079c1; background: #fff; border-radius: 0; }
.large { height: 43px; }

.content { padding: 48px 0 0 611px; flex: 1; }
.banner { margin: 0; width: 1406px; height: 72px; background: #b0c4de; font-size: 36px; line-height: 72px; text-align: center; letter-spacing: -.1px; }
.layers { margin-top: 46px; display: grid; grid-template-columns: 226px 237px 220px 235px 249px 237px 306px 269px; height: 280px; }
.layer { display: flex; flex-direction: column; align-items: center; text-align: center; font-size: 32px; line-height: 54px; white-space: nowrap; }
.layer span { margin: 0 -20px; padding-left: 9px; }
.icon { display: block; width: 174px; height: 174px; fill: none; stroke: #fff; stroke-width: 5.5; }
.icon .thin { stroke-width: 3; }
.icon .mid { stroke-width: 4; }
.icon .solid { fill: #fff; stroke: none; }
.economic .icon { background: #718d43; }
.engineering .icon { background: #5877b8; }
.landmark .icon { background: #e19e2f; }
.planning .icon { background: #cf5029; }
.transport .icon { background: #825b2e; }
.bulb .icon { background: #2a9380; }
.citymap .icon { background: #ebe9e4; overflow: hidden; }
.alameda .icon { background: #999; }
.citymap path { vector-effect: non-scaling-stroke; }
.org { stroke: #f9a51a; stroke-width: 3.5; }
.wht { stroke: #fff; stroke-width: 14; }
.crm { stroke: #fdf6dc; stroke-width: 16; }
.icon .vernon { font: 17px "Open Sans", sans-serif; fill: #666; stroke: none; }
.alameda .icon text { font: 600 42px "Open Sans", sans-serif; fill: #fff; stroke: #fff; stroke-width: .6; }
p { margin: 0; white-space: nowrap; }
.welcome { margin-top: 97px; font-size: 36px; line-height: 60px; letter-spacing: .115px; }
.roomy { letter-spacing: .22px; }
.support { margin-top: 93px; font-size: 28px; line-height: 46px; letter-spacing: .115px; }
.support b { color: #f00; }

.footer { height: 303px; flex: none; background: #5480bb; color: #fff; font-size: 36px; text-align: center; padding-top: 132px; letter-spacing: .07px; }
.footer nav { display: flex; justify-content: center; line-height: 60px; padding-right: 14px; }
.footer nav a { text-decoration: underline; text-decoration-thickness: 2px; text-underline-offset: 4px; }
.footer nav span { width: 69px; }
.footer p { line-height: 60px; margin-top: 60px; padding-right: 6px; }
```
